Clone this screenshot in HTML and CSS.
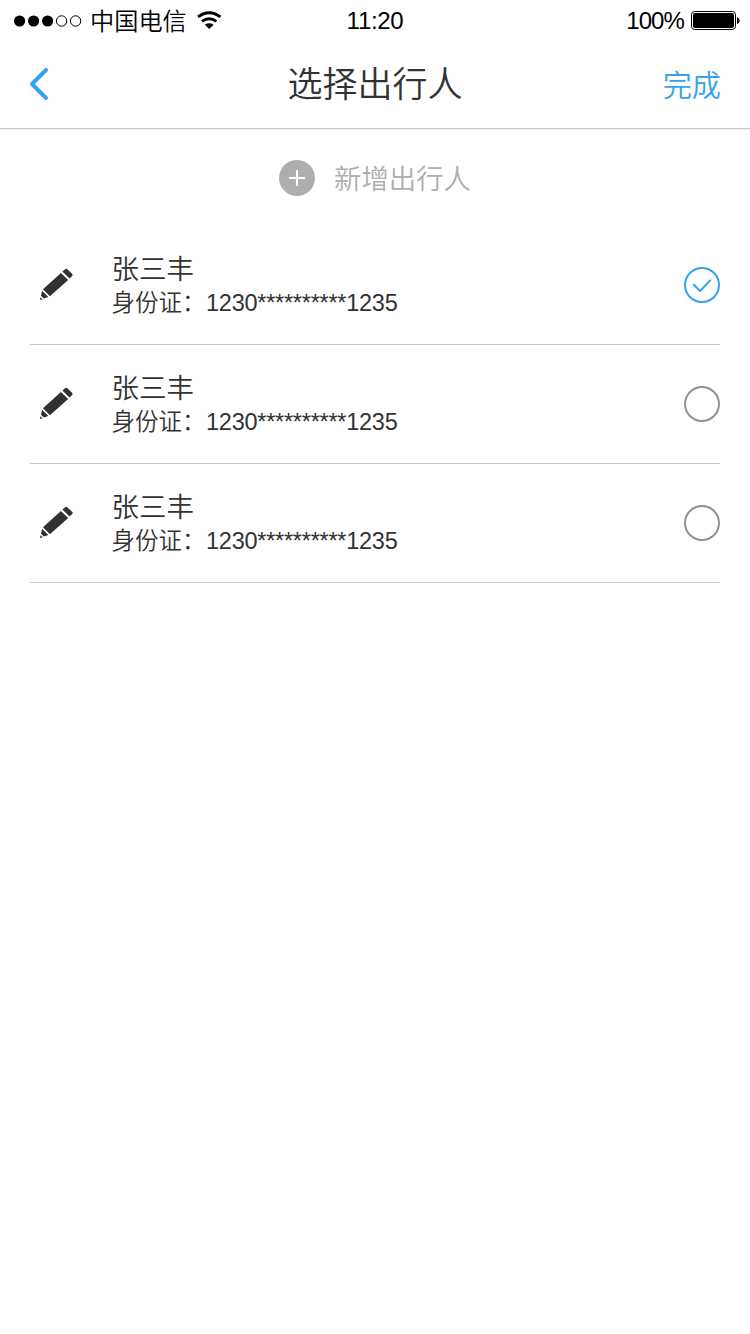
FILE: index.html
```html
<!DOCTYPE html>
<html lang="zh-CN">
<head>
<meta charset="utf-8">
<title>选择出行人</title>
<link rel="stylesheet" href="styles.css">
</head>
<body>
<svg class="defs" width="0" height="0">
  <symbol id="pencil" viewBox="0 0 34 34">
    <path d="M24.8 1.5Q26.3 .2 27.6 1.5L32.1 5.8Q33.2 7.1 32 8.3L29.5 10.6L22.4 3.6ZM20.9 4.9L28.2 11.9L9.9 28.2L3 21.2ZM2.1 22.7L8.4 29L3.8 30.6L1 27.8ZM.5 29.2L2.7 31.3L0 32Z"/>
  </symbol>
</svg>
<div class="status">
  <div class="status-left">
    <svg class="signal" width="68" height="13" viewBox="0 0 68 13">
      <circle cx="5.6" cy="7" r="5.6"/><circle cx="19.6" cy="7" r="5.6"/><circle cx="33.6" cy="7" r="5.6"/>
      <circle class="hollow" cx="47.6" cy="7" r="5.2"/><circle class="hollow" cx="61.6" cy="7" r="5.2"/>
    </svg>
    <span class="carrier">中国电信</span>
    <svg class="wifi" width="24" height="19" viewBox="0 0 24 19">
      <path class="arc" d="M1 5.8Q12.2 -2.4 23.4 5.8M5 10.4Q12.2 5 19.4 10.4"/>
      <path d="M7.8 13.7Q12.2 10.9 16.6 13.7L12.2 18Z"/>
    </svg>
  </div>
  <span class="clock">11:20</span>
  <div class="status-right">
    <span class="percent">100%</span>
    <svg width="49" height="19" viewBox="0 0 49 19">
      <rect class="shell" x=".5" y=".5" width="44" height="18" rx="3.2"/>
      <rect x="2" y="2" width="41" height="15" rx="2"/>
      <path d="M46 6Q48.7 7 48.7 9.5T46 13Z"/>
    </svg>
  </div>
</div>
<header class="nav">
  <svg class="back" width="20" height="34" viewBox="0 0 20 34"><path d="M17 3L3 17L17 31"/></svg>
  <h1 class="title">选择出行人</h1>
  <span class="done">完成</span>
</header>
<div class="add">
  <svg width="36" height="36" viewBox="0 0 36 36"><circle cx="18" cy="18" r="18"/><path d="M10 18H26M18 10V26"/></svg>
  <span class="add-label">新增出行人</span>
</div>
<ul class="list">
  <li class="row">
    <svg class="edit" width="34" height="34"><use href="#pencil"/></svg>
    <div class="info"><div class="name">张三丰</div><div class="card">身份证：<span class="number">1230**********1235</span></div></div>
    <svg class="radio checked" width="36" height="36" viewBox="0 0 36 36"><circle cx="18" cy="18" r="17"/><path d="M9.8 17.8L16 24L26.3 13.4"/></svg>
  </li>
  <li class="row">
    <svg class="edit" width="34" height="34"><use href="#pencil"/></svg>
    <div class="info"><div class="name">张三丰</div><div class="card">身份证：<span class="number">1230**********1235</span></div></div>
    <svg class="radio" width="36" height="36" viewBox="0 0 36 36"><circle cx="18" cy="18" r="17"/></svg>
  </li>
  <li class="row">
    <svg class="edit" width="34" height="34"><use href="#pencil"/></svg>
    <div class="info"><div class="name">张三丰</div><div class="card">身份证：<span class="number">1230**********1235</span></div></div>
    <svg class="radio" width="36" height="36" viewBox="0 0 36 36"><circle cx="18" cy="18" r="17"/></svg>
  </li>
</ul>
</body>
</html>
```
FILE: styles.css
```css
* { box-sizing: border-box; }
body {
  margin: 0;
  min-height: 1334px;
  background: #fff;
  color: #323233;
  font-family: "Noto Sans CJK SC", sans-serif;
  font-weight: 350;
}
svg { display: block; flex: none; }
.defs { position: absolute; }
.status {
  display: grid;
  grid-template-columns: 1fr auto 1fr;
  align-items: center;
  height: 40px;
  padding: 0 10px 0 14px;
  color: #000;
  line-height: 40px;
}
.status-left, .status-right { display: flex; align-items: center; }
.status-right { justify-content: flex-end; gap: 7px; }
.carrier { margin: 0 10px 0 8px; font-size: 24.2px; }
.hollow { fill: none; stroke: #000; }
.arc { fill: none; stroke: #000; stroke-width: 2.8; }
.shell { fill: none; stroke: #000; }
.clock, .percent {
  padding-top: 2px;
  font: 400 24px/38px "Liberation Sans", sans-serif;
  letter-spacing: -0.3px;
}
.clock { padding-right: 4px; }
.percent { letter-spacing: -0.9px; }
.nav {
  display: grid;
  grid-template-columns: 1fr auto 1fr;
  align-items: center;
  height: 90px;
  padding: 0 29px 2px;
  border-bottom: 1px solid #ececec;
  box-shadow: inset 0 -1px #c8c8c8;
}
.back path {
  fill: none;
  stroke: #35a2f0;
  stroke-width: 4;
  stroke-linecap: round;
  stroke-linejoin: round;
}
.title { margin: 0; font-size: 35px; font-weight: 350; line-height: 84px; padding-bottom: 3px; }
.done { padding-bottom: 1px; color: #35a2f0; font-size: 29.2px; line-height: 84px; text-align: right; }
.add {
  display: flex;
  justify-content: center;
  align-items: center;
  gap: 19px;
  height: 96px;
  color: #aeaeae;
}
.add circle { fill: #aeaeae; }
.add path { stroke: #fff; stroke-width: 2; }
.add-label { padding-bottom: 2px; font-size: 27.4px; line-height: 40px; }
.list { margin: 0; padding: 0 30px; list-style: none; }
.row {
  display: flex;
  align-items: center;
  height: 119px;
  border-bottom: 1px solid #c8c8c8;
}
.edit { margin: 0 37.5px 0 10px; fill: #323233; }
.info { flex: 1; }
.name { font-size: 27.5px; line-height: 34px; }
.card { font-size: 23.5px; line-height: 34px; white-space: nowrap; }
.number { padding-left: .5px; font-family: "Liberation Sans", sans-serif; font-size: 23.5px; font-weight: 400; letter-spacing: -0.25px; }
.radio { fill: none; stroke: #929292; stroke-width: 2; }
.checked { stroke: #35a2f0; stroke-linecap: round; stroke-linejoin: round; }
```
